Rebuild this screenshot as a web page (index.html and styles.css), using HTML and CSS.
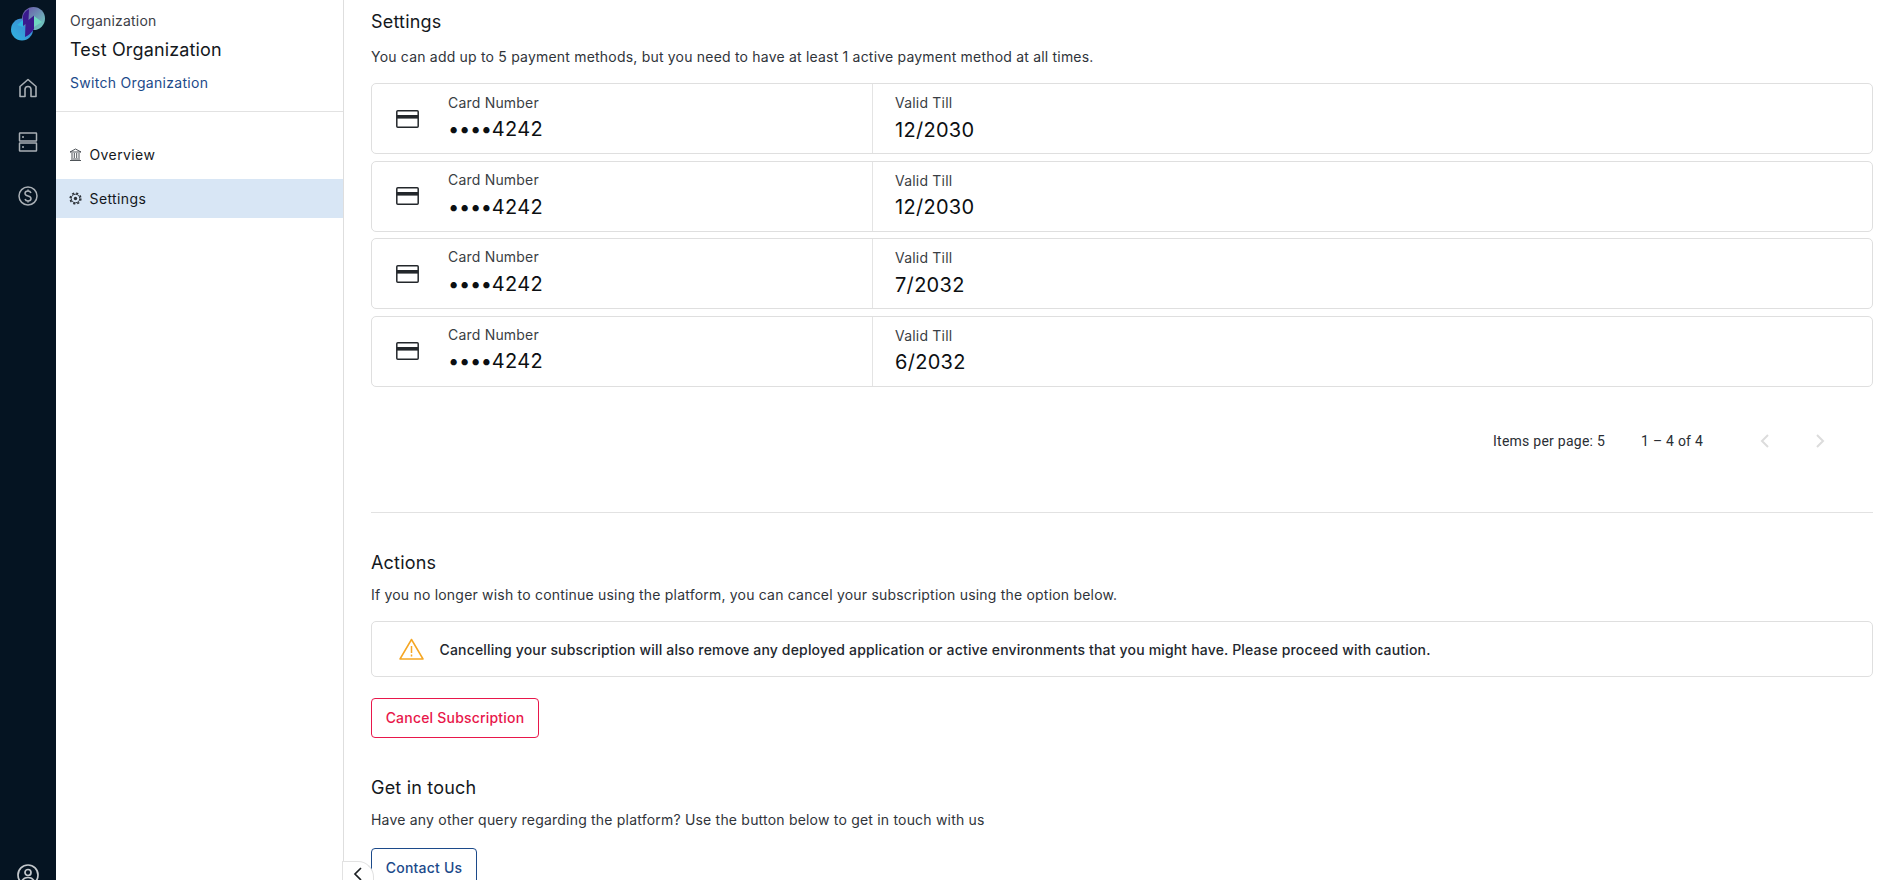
FILE: index.html
```html
<!DOCTYPE html>
<html lang="en">
<head>
<meta charset="utf-8">
<title>Settings</title>
<link rel="stylesheet" href="styles.css">
</head>
<body>
<div class="app">
  <nav class="rail">
    <svg class="logo" width="34" height="34" viewBox="0 0 34 34">
      <defs>
        <linearGradient id="lgA" x1="0" y1="1" x2="1" y2="0"><stop offset="0" stop-color="#2fb6e0"/><stop offset="1" stop-color="#3f7fd0"/></linearGradient>
        <linearGradient id="lgB" x1="0" y1="0" x2="1" y2="1"><stop offset="0" stop-color="#6a4aa8"/><stop offset="1" stop-color="#6fd8c0"/></linearGradient>
      </defs>
      <circle cx="11" cy="22.500" r="11" fill="url(#lgA)"/>
      <circle cx="22.500" cy="11.500" r="11.500" fill="url(#lgB)"/>
      <path d="M12 9Q13 5 18 2L17.500 13 23 8.500V22Q20 27 14 30L14.500 17 12 19Z" fill="#3a1a8e"/>
      <path d="M23 9 31 15 23 20Z" fill="#6fd8c0"/>
      <path d="M6 18 12 13V20Z" fill="#2fb6e0"/>
    </svg>
    <svg class="rail-icon home" width="20" height="20" viewBox="0 0 20 20" fill="none" stroke="#a9afb5" stroke-width="1.600" stroke-linejoin="round"><path d="M2 8.500 10 1.500l8 7V18.500h-5V11.500a3 3 0 0 0-6 0V18.500H2z"/></svg>
    <svg class="rail-icon server" width="20" height="20" viewBox="0 0 20 20" fill="none" stroke="#a9afb5" stroke-width="1.500"><rect x="1.500" y="1" width="17" height="8" rx=".5"/><rect x="1.500" y="11" width="17" height="8" rx=".5"/><path d="M4 5h2M4 15h2"/></svg>
    <svg class="rail-icon dollar" width="20" height="20" viewBox="0 0 20 20" fill="none" stroke="#a9afb5" stroke-width="1.500"><circle cx="10" cy="10" r="9"/><path d="M13 7c-.5-1.300-1.600-2-3-2-1.800 0-3 1-3 2.500 0 3.300 6 1.700 6 5 0 1.500-1.300 2.500-3 2.500-1.500 0-2.600-.7-3-2M10 3.500V5M10 15v1.500"/></svg>
    <svg class="rail-icon user" width="22" height="22" viewBox="0 0 22 22" fill="none" stroke="#c4c8cc" stroke-width="1.700"><circle cx="11" cy="11" r="10"/><circle cx="11" cy="8.500" r="3"/><path d="M4.500 18c1-3 3.500-4.500 6.500-4.500s5.500 1.500 6.500 4.500"/></svg>
  </nav>

  <aside class="side">
    <div class="org">
      <div class="org-label">Organization</div>
      <div class="org-name">Test Organization</div>
      <a class="org-switch">Switch Organization</a>
    </div>
    <ul class="menu">
      <li class="menu-item">
        <svg width="13" height="13" viewBox="0 0 13 13" fill="none" stroke="#3a3f45" stroke-width=".9"><path d="M1 4 6.500 1 12 4zM1 12.500h11M2 11h9M3 5v5M5.300 5v5M7.700 5v5M10 5v5"/></svg>
        <span>Overview</span>
      </li>
      <li class="menu-item active">
        <svg width="13" height="13" viewBox="0 0 13 13" fill="none" stroke="#2a2f35"><circle cx="6.500" cy="6.500" r="4.300" stroke-width="1"/><circle cx="6.500" cy="6.500" r="5.400" stroke-width="1.400" stroke-dasharray="2.200 2.040"/><circle cx="6.500" cy="6.500" r="1.700" fill="#2a2f35" stroke="none"/></svg>
        <span>Settings</span>
      </li>
    </ul>
    <button class="collapse" aria-label="Collapse">
      <svg width="10" height="14" viewBox="0 0 10 14" fill="none" stroke="#1c2024" stroke-width="1.700"><path d="M8 1 2 7l6 6"/></svg>
    </button>
  </aside>

  <main class="main">
    <h2 class="title first">Settings</h2>
    <p class="desc lead">You can add up to 5 payment methods, but you need to have at least 1 active payment method at all times.</p>

    <div class="cards">
      <div class="card">
        <div class="card-left">
          <svg class="card-icon" width="23" height="18" viewBox="0 0 23 18" fill="none" stroke="#23272b" stroke-width="1.500"><rect x=".8" y=".8" width="21.400" height="16.400" rx="1"/><path d="M1 6.800h21" stroke-width="3.600"/></svg>
          <div><div class="label">Card Number</div><div class="value"><span class="dots">••••</span>4242</div></div>
        </div>
        <div class="card-right"><div class="label">Valid Till</div><div class="value">12/2030</div></div>
      </div>
      <div class="card">
        <div class="card-left">
          <svg class="card-icon" width="23" height="18" viewBox="0 0 23 18" fill="none" stroke="#23272b" stroke-width="1.500"><rect x=".8" y=".8" width="21.400" height="16.400" rx="1"/><path d="M1 6.800h21" stroke-width="3.600"/></svg>
          <div><div class="label">Card Number</div><div class="value"><span class="dots">••••</span>4242</div></div>
        </div>
        <div class="card-right"><div class="label">Valid Till</div><div class="value">12/2030</div></div>
      </div>
      <div class="card">
        <div class="card-left">
          <svg class="card-icon" width="23" height="18" viewBox="0 0 23 18" fill="none" stroke="#23272b" stroke-width="1.500"><rect x=".8" y=".8" width="21.400" height="16.400" rx="1"/><path d="M1 6.800h21" stroke-width="3.600"/></svg>
          <div><div class="label">Card Number</div><div class="value"><span class="dots">••••</span>4242</div></div>
        </div>
        <div class="card-right"><div class="label">Valid Till</div><div class="value">7/2032</div></div>
      </div>
      <div class="card">
        <div class="card-left">
          <svg class="card-icon" width="23" height="18" viewBox="0 0 23 18" fill="none" stroke="#23272b" stroke-width="1.500"><rect x=".8" y=".8" width="21.400" height="16.400" rx="1"/><path d="M1 6.800h21" stroke-width="3.600"/></svg>
          <div><div class="label">Card Number</div><div class="value"><span class="dots">••••</span>4242</div></div>
        </div>
        <div class="card-right"><div class="label">Valid Till</div><div class="value">6/2032</div></div>
      </div>
    </div>

    <div class="pager">
      <span class="per-page">Items per page: 5</span>
      <span class="range">1 – 4 of 4</span>
      <svg class="arrow" width="10" height="14" viewBox="0 0 10 14" fill="none" stroke="#dcdcdc" stroke-width="2"><path d="M8 1 2 7l6 6"/></svg>
      <svg class="arrow" width="10" height="14" viewBox="0 0 10 14" fill="none" stroke="#dcdcdc" stroke-width="2"><path d="M2 1l6 6-6 6"/></svg>
    </div>

    <hr class="rule">

    <h2 class="title">Actions</h2>
    <p class="desc">If you no longer wish to continue using the platform, you can cancel your subscription using the option below.</p>
    <div class="notice">
      <svg width="25" height="22" viewBox="0 0 25 22" fill="none" stroke="#f5a623" stroke-width="1.500" stroke-linejoin="round"><path d="M12.500 1.500 24 21H1z"/><path d="M12.500 8v7M12.500 16.500v2"/></svg>
      <span>Cancelling your subscription will also remove any deployed application or active environments that you might have. Please proceed with caution.</span>
    </div>
    <button class="btn btn-danger">Cancel Subscription</button>

    <h2 class="title touch">Get in touch</h2>
    <p class="desc">Have any other query regarding the platform? Use the button below to get in touch with us</p>
    <button class="btn btn-primary">Contact Us</button>
  </main>
</div>
</body>
</html>
```
FILE: styles.css
```css
* { box-sizing: border-box; }
html, body { margin: 0; height: 100%; overflow: hidden; background: #fff; }
body { font-family: Inter, "Liberation Sans", sans-serif; color: #14181d; }
.app { display: flex; height: 880px; overflow: hidden; }

.rail { width: 56px; flex: none; background: #051422; display: flex; flex-direction: column; align-items: center; padding-top: 7px; }
.rail-icon { display: block; flex: none; }
.home { margin-top: 37px; }
.server { margin-top: 34px; }
.dollar { margin-top: 34px; }
.user { margin-top: auto; margin-bottom: -6px; }

.side { width: 288px; flex: none; border-right: 1px solid #dedede; position: relative; }
.org { height: 112px; padding: 12px 14px 0; border-bottom: 1px solid #e2e2e2; }
.org-label { font-size: 14px; line-height: 18px; color: #3c4046; letter-spacing: .2px; }
.org-name { font-size: 18px; line-height: 24px; margin-top: 8px; color: #14181d; letter-spacing: .15px; }
.org-switch { display: block; font-size: 14px; line-height: 20px; margin-top: 11px; color: #1c4a8a; letter-spacing: .3px; }
.menu { list-style: none; margin: 23px 0 0; padding: 0; }
.menu-item { height: 39px; padding-left: 13px; display: flex; align-items: center; gap: 7.500px; font-size: 14px; letter-spacing: .4px; color: #14181d; margin-bottom: 5px; }
.menu-item.active { background: #d8e6f5; }
.collapse { position: absolute; right: -31px; bottom: 0; width: 32px; height: 19px; padding: 5px 0 0 0; background: #fff; border: 1px solid #e2e2e2; border-bottom: 0; border-radius: 0 16px 0 0; display: flex; justify-content: center; align-items: flex-start; }

.main { flex: 1; min-width: 0; padding: 0 20px 0 27px; }
.title { font-size: 18px; font-weight: 400; line-height: 24px; margin: 0; color: #14181d; letter-spacing: .2px; }
.title.first { margin-top: 10px; }
.title.touch { margin-top: 38px; }
.desc { font-size: 14px; line-height: 20px; margin: 10px 0 0; color: #30343a; letter-spacing: .2px; }
.desc.lead { margin-top: 13.400px; }
.cards { margin-top: 16px; display: flex; flex-direction: column; gap: 6.400px; }
.card { height: 71px; border: 1px solid #dfdfdf; border-radius: 5px; display: flex; }
.card-left { width: 501px; border-right: 1px solid #e4e4e4; display: flex; align-items: center; padding-left: 24px; }
.card-icon { margin-right: 29px; }
.card-right { padding: 9px 0 0 22px; }
.card-left > div { margin-top: -2px; }
.label { font-size: 14px; line-height: 20px; color: #3a3e44; letter-spacing: .2px; }
.value { font-size: 20px; line-height: 28px; letter-spacing: .3px; color: #0c0f12; margin-top: 2.500px; }
.dots { letter-spacing: -.3px; }

.pager { display: flex; align-items: center; height: 20px; margin-top: 44.300px; font-family: Roboto, "Liberation Sans", sans-serif; font-size: 14px; letter-spacing: .25px; color: #2a2e34; padding-left: 1122px; }
.range { margin-left: 36px; }
.arrow { margin-left: 57px; }
.pager .arrow:last-child { margin-left: 44.600px; }

.rule { border: 0; border-top: 1px solid #e2e2e2; margin: 61px 0 0; }
.rule + .title { margin-top: 38.500px; }
.notice { margin-top: 16px; height: 56px; border: 1px solid #dfdfdf; border-radius: 5px; display: flex; align-items: center; gap: 15.500px; padding-left: 27px; font-size: 14px; font-weight: 500; letter-spacing: .17px; color: #23272d; }
.btn { display: block; background: #fff; font: 500 14px/20px Inter, "Liberation Sans", sans-serif; letter-spacing: .2px; white-space: nowrap; border-radius: 4px; height: 40px; padding: 0; }
.btn-danger { margin-top: 21px; width: 168px; border: 1px solid #e8174b; color: #e8174b; }
.btn-primary { margin-top: 18px; width: 106px; border: 1px solid #1c4a8a; color: #1c4a8a; }
```
